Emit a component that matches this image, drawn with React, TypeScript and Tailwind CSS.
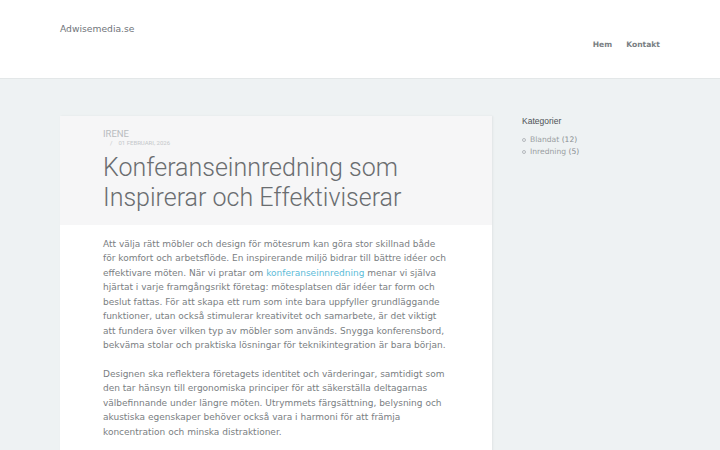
export default function App() {
  return (
    <div className="min-h-[450px] bg-[#eef2f3] font-['DejaVu_Sans',sans-serif]">
      {/* Header */}
      <header className="h-[79px] border-b border-[#e3e7e8] bg-white">
        <div className="mx-auto flex w-[600px] items-start justify-between">
          <a className="mt-[22px] text-[9.2px] text-[#6f7479]">Adwisemedia.se</a>
          <nav className="mt-[39px] flex gap-[14px] text-[7.6px] font-bold text-[#7a7f84]">
            <a>Hem</a>
            <a>Kontakt</a>
          </nav>
        </div>
      </header>

      <div className="mx-auto flex w-[600px] items-start gap-[30px] pt-[37px]">
        {/* Post */}
        <article className="w-[432px] shrink-0 bg-white shadow-[1px_0_2px_rgba(0,0,0,0.06)]">
          <div className="bg-[#f6f6f7] px-[43px] pb-[12px] pt-[12px] font-['Roboto',sans-serif]">
            <div className="text-[9.5px] uppercase leading-[11px] text-[#b9bcbf]">Irene</div>
            <div className="ml-[7px] text-[6px] uppercase leading-[8px] text-[#c4c7ca]">
              /&nbsp;&nbsp;&nbsp;&nbsp;01 Februari, 2026
            </div>
            <h1 className="mt-[6px] text-[25px] font-light leading-[30px] text-[#6a6d70]">
              Konferanseinnredning som Inspirerar och Effektiviserar
            </h1>
          </div>
          <div className="pl-[43px] pr-[42px] pt-[12px] pb-6 text-[9px] leading-[14.43px] text-[#7a7e82]">
            <p>
              Att välja rätt möbler och design för mötesrum kan göra stor skillnad både för komfort och
              arbetsflöde. En inspirerande miljö bidrar till bättre idéer och effektivare möten. När vi pratar
              om <a className="text-[#5bbbd8]">konferanseinnredning</a> menar vi själva hjärtat i varje
              framgångsrikt företag: mötesplatsen där idéer tar form och beslut fattas. För att skapa ett rum
              som inte bara uppfyller grundläggande funktioner, utan också stimulerar kreativitet och
              samarbete, är det viktigt att fundera över vilken typ av möbler som används. Snygga
              konferensbord, bekväma stolar och praktiska lösningar för teknikintegration är bara början.
            </p>
            <p className="mt-[14.43px]">
              Designen ska reflektera företagets identitet och värderingar, samtidigt som den tar hänsyn till
              ergonomiska principer för att säkerställa deltagarnas välbefinnande under längre möten.
              Utrymmets färgsättning, belysning och akustiska egenskaper behöver också vara i harmoni för att
              främja koncentration och minska distraktioner.
            </p>
          </div>
        </article>

        {/* Sidebar */}
        <aside>
          <h3 className="font-['Liberation_Sans',sans-serif] text-[8.5px] leading-[10px] text-[#4d5155]">
            Kategorier
          </h3>
          <ul className="mt-[8px] text-[7.6px] leading-[12px] text-[#9a9ea2]">
            <li className="flex items-center gap-[4px]">
              <span className="h-[4px] w-[4px] rounded-full border border-[#b5b9bd]" />
              <span>
                Blandat <span className="text-[#888c90]">(12)</span>
              </span>
            </li>
            <li className="flex items-center gap-[4px]">
              <span className="h-[4px] w-[4px] rounded-full border border-[#b5b9bd]" />
              <span>
                Inredning <span className="text-[#888c90]">(5)</span>
              </span>
            </li>
          </ul>
        </aside>
      </div>
    </div>
  )
}
